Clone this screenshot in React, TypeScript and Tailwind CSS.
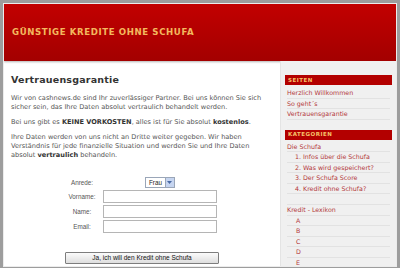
import React from 'react';

const sans = { fontFamily: '"DejaVu Sans", Verdana, sans-serif' };

function SideHead({ title }: { title: string }) {
  return (
    <div className="bg-[#b30000] px-[3px] h-[10px] flex items-center text-[5.5px] font-bold tracking-[0.5px] text-[#f6c36a]">
      {title}
    </div>
  );
}

function SideLink({ label, indent = '' }: { label: string; indent?: string }) {
  return (
    <div className={`h-[10.5px] flex items-center border-b border-[#e2e2e2] text-[6.3px] text-[#b3373a] ${indent}`}>
      {label}
    </div>
  );
}

export default function App() {
  return (
    <div className="min-h-screen bg-[#9d9d9d] p-[3px]" style={sans}>
      <div className="border border-[#ececec] bg-white h-[264px] overflow-hidden">
        <div className="h-[57px] bg-gradient-to-b from-[#c20000] to-[#a30000] flex items-center px-[8px] shadow-[0_1px_2px_rgba(0,0,0,0.3)]">
          <h1 className="text-[8.6px] font-bold tracking-[0.6px] text-[#f3b85e]">GÜNSTIGE KREDITE OHNE SCHUFA</h1>
        </div>
        <div className="flex h-[206px]">
          <div className="w-[276px] px-[7px] pt-[12px] text-[#555]">
            <h2 className="text-[9.5px] font-bold text-[#333] mb-[7px] tracking-[0.2px]">Vertrauensgarantie</h2>
            <p className="text-[6.6px] leading-[9px] mb-[6px]">
              Wir von cashnews.de sind Ihr zuverlässiger Partner. Bei uns können Sie sich sicher sein, das Ihre Daten absolut vertraulich behandelt werden.
            </p>
            <p className="text-[6.6px] leading-[9px] mb-[6px]">
              Bei uns gibt es <b className="text-[#333]">KEINE VORKOSTEN</b>, alles ist für Sie absolut <b className="text-[#333]">kostenlos</b>.
            </p>
            <p className="text-[6.6px] leading-[9px]">
              Ihre Daten werden von uns nicht an Dritte weiter gegeben. Wir haben Verständnis für jede finanzielle Situation und werden Sie und Ihre Daten absolut <b className="text-[#333]">vertraulich</b> behandeln.
            </p>
            <div className="mt-[17px] pl-[50px] text-[6.3px] text-[#555]" style={{ fontFamily: '"Liberation Sans", Arial, sans-serif' }}>
              <div className="grid grid-cols-[42px_114px] gap-y-[2px] items-center">
                <div className="text-center">Anrede:</div>
                <div className="flex justify-center">
                  <div className="h-[11px] border border-[#9aa6b8] bg-white flex items-center">
                    <span className="px-[3px] text-[#222]">Frau</span>
                    <span className="w-[9px] h-[9px] bg-[#c6d5f0] border-l border-[#9aa6b8] flex items-center justify-center">
                      <svg width="5" height="3" viewBox="0 0 5 3"><path d="M0 0 L2.5 3 L5 0 Z" fill="#4a6aa5" /></svg>
                    </span>
                  </div>
                </div>
                <div className="text-center">Vorname:</div>
                <div className="h-[13px] border border-[#b5b5b5] bg-white" />
                <div className="text-center">Name:</div>
                <div className="h-[13px] border border-[#b5b5b5] bg-white" />
                <div className="text-center">Email:</div>
                <div className="h-[13px] border border-[#b5b5b5] bg-white" />
              </div>
              <div className="mt-[19px] ml-[4px] w-[154px] h-[12px] border border-[#7d7d7d] rounded-[1px] bg-gradient-to-b from-[#fbfbfb] to-[#dedede] flex items-center justify-center text-[6.5px] text-[#111]">
                Ja, ich will den Kredit ohne Schufa
              </div>
            </div>
          </div>
          <div className="flex-1 bg-[#f0f0f0] border-l border-[#e4e4e4] px-[4px] pt-[14px]">
            <SideHead title="SEITEN" />
            <div className="px-[2px] pt-[3px]">
              <SideLink label="Herzlich Willkommen" />
              <SideLink label="So geht´s" />
              <SideLink label="Vertrauensgarantie" />
            </div>
            <div className="mt-[10px]">
              <SideHead title="KATEGORIEN" />
            </div>
            <div className="px-[2px] pt-[2px]">
              <SideLink label="Die Schufa" />
              <SideLink label="1. Infos über die Schufa" indent="pl-[8px]" />
              <SideLink label="2. Was wird gespeichert?" indent="pl-[8px]" />
              <SideLink label="3. Der Schufa Score" indent="pl-[8px]" />
              <SideLink label="4. Kredit ohne Schufa?" indent="pl-[8px]" />
              <div className="h-[11px] border-b border-[#e2e2e2]" />
              <SideLink label="Kredit - Lexikon" />
              <SideLink label="A" indent="pl-[9px]" />
              <SideLink label="B" indent="pl-[9px]" />
              <SideLink label="C" indent="pl-[9px]" />
              <SideLink label="D" indent="pl-[9px]" />
              <SideLink label="E" indent="pl-[9px]" />
            </div>
          </div>
        </div>
      </div>
    </div>
  );
}
